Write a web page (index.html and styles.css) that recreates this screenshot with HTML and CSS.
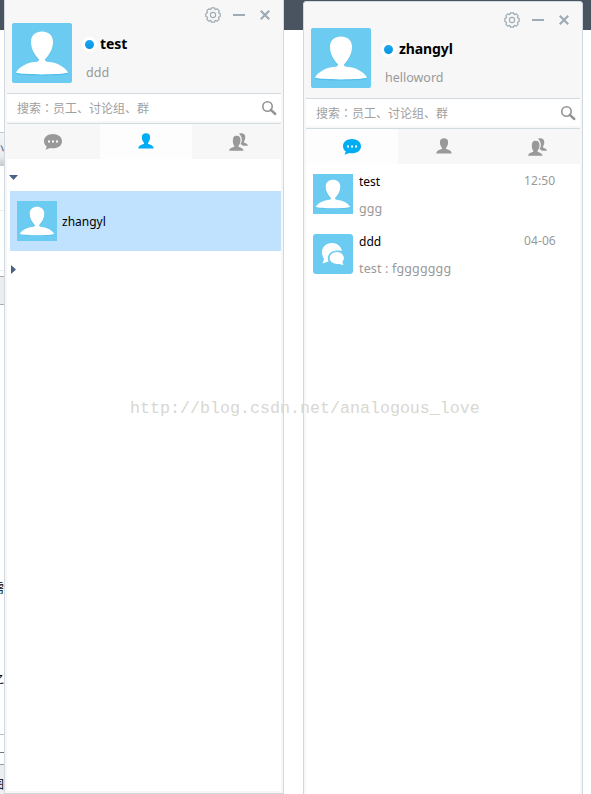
FILE: index.html
```
<!DOCTYPE html>
<html lang="zh-CN">
<head>
<meta charset="utf-8">
<title>Chat</title>
<link rel="stylesheet" href="styles.css">
</head>
<body>
<svg class="defs" width="0" height="0">
  <symbol id="avatar" viewBox="0 0 60 60">
    <rect width="60" height="60" fill="#6ccbf1"/>
    <path d="M4 51C7 45 15 41 23 40.500Q27 40 27 37.500C22 33 19 27 19 19C19 12 24 9 30 9S41 12 41 19C41 27 38 33 33 37.500Q33 40 37 40.500C45 41 53 45 56 51C51 53 9 53 4 51Z" fill="#3fb5e8" opacity=".55"/>
    <path d="M4 49.500C7 44 15 39.500 23 39Q27 39 27 36.500C22 31 19 26 19 18.500C19 12 24 8.500 30 8.500S41 12 41 18.500C41 26 38 31 33 36.500Q33 39 37 39C45 39.500 53 44 56 49.500C51 52 9 52 4 49.500Z" fill="#fff"/>
  </symbol>
  <symbol id="group" viewBox="0 0 40 40">
    <rect width="40" height="40" rx="3" fill="#6ccbf1"/>
    <path d="M19 9C13 9 9 13 9 18C9 21 10 23 11 25L9.500 29.500L15.500 27.500C13 20 19 15 29 17C28 12 24 9 19 9Z" fill="#fff"/>
    <path d="M23.500 17.500C19 17.500 16 20.500 16 24S19 30.500 23.500 30.500H26L31.500 32L30 28C34 23 29.500 17.500 23.500 17.500Z" fill="#fff" stroke="#6ccbf1" stroke-width="1.200"/>
  </symbol>
  <symbol id="gear" viewBox="0 0 16 16">
    <path d="M6.500 .8H9.500L10.200 2.600L12.300 1.900L14.100 3.700L13.400 5.800L15.200 6.500V9.500L13.400 10.200L14.100 12.300L12.300 14.100L10.200 13.400L9.500 15.200H6.500L5.800 13.400L3.700 14.100L1.900 12.300L2.600 10.200L.8 9.500V6.500L2.600 5.800L1.900 3.700L3.700 1.900L5.800 2.600Z" fill="none" stroke="#9eabb4" stroke-width="1.200" stroke-linejoin="round"/>
    <circle cx="8" cy="8" r="2.600" fill="none" stroke="#9eabb4" stroke-width="1.100"/>
  </symbol>
  <symbol id="close" viewBox="0 0 10 10">
    <path d="M.8 .8L9.200 9.200M9.200 .8L.8 9.200" stroke="#9eabb4" stroke-width="2.200"/>
  </symbol>
  <symbol id="search" viewBox="0 0 16 16">
    <circle cx="6.500" cy="6.500" r="4.700" fill="none" stroke="#939393" stroke-width="1.600"/>
    <path d="M9.800 9.800L14.300 14" stroke="#939393" stroke-width="2.400" stroke-linecap="round"/>
  </symbol>
  <symbol id="bubble" viewBox="0 0 18 16">
    <path d="M9 0C4 0 0 2.800 0 7C0 9.500 1 11.300 2.800 12.600L1.500 15.800L6.300 14Q7.500 14.300 9 14.300C14 14.300 18 11.500 18 7.200S14 0 9 0Z" fill="currentColor"/>
    <path d="M4 6.500H6V8.500H4ZM8 6.500H10V8.500H8ZM12 6.500H14V8.500H12Z" fill="#fff"/>
  </symbol>
  <symbol id="person" viewBox="0 0 16 16">
    <path d="M.3 15.500C.5 12.500 3 12 5.800 11Q6.300 10.500 5.900 9.700C4.300 8 3.900 6 3.900 4C3.900 1.500 5.500 .3 8 .3S12.100 1.500 12.100 4C12.100 6 11.700 8 10.100 9.700Q9.700 10.500 10.200 11C13 12 15.500 12.500 15.700 15.500Z" fill="currentColor"/>
  </symbol>
  <symbol id="people" viewBox="0 0 20 18">
    <path d="M10 .8C13 -.3 16.500 .6 16.300 4.500C16.200 6.800 15 8 15 9.200C16 10.500 18.500 10 19 12.700H14C12.500 11.500 12 11.500 11.500 11C13.500 8 13.500 4 10 .8Z" fill="currentColor"/>
    <path d="M.2 17.800C.5 15 3 14.800 5.200 13.800C5.700 13 5 12.500 4.500 11.500C3.600 9.500 3.800 7.500 4 6C4.500 3 6 2.700 7.800 2.700C10.500 2.700 11.500 4.500 11.500 7C11.500 9 11 11 9.700 12.500Q9.300 13.500 10 14C12 15 14.300 15 14.500 17.800Z" fill="currentColor"/>
  </symbol>
</svg>
<div class="desktop">
  <div class="behind">
    <i class="b-title"></i><i class="b-tool">小</i><i class="b-line"></i><i class="b-bar"></i>
    <i class="b-char">需</i><i class="b-char2">之</i><i class="b-rule"></i><i class="b-foot">图</i>
  </div>
  <section class="window first">
    <div class="panel">
      <header>
        <svg class="avatar"><use href="#avatar"/></svg>
        <div class="identity"><div class="nick"><span class="dot"></span>test</div><div class="sign">ddd</div></div>
        <div class="controls"><svg class="gear"><use href="#gear"/></svg><span class="min"></span><svg class="close"><use href="#close"/></svg></div>
      </header>
      <div class="search"><span>搜索<span lang="ja" class="colon">：</span>员工、讨论组、群</span><svg><use href="#search"/></svg></div>
      <nav><a><svg class="bubble"><use href="#bubble"/></svg></a><a class="on"><svg class="person"><use href="#person"/></svg></a><a><svg class="people"><use href="#people"/></svg></a></nav>
      <main class="contacts">
        <div class="fold"><svg width="9" height="5"><path d="M0 0H9L4.500 5Z"/></svg></div>
        <div class="contact"><svg><use href="#avatar"/></svg><span>zhangyl</span></div>
        <div class="fold closed"><svg width="5" height="9"><path d="M0 0V9L5 4.500Z"/></svg></div>
      </main>
    </div>
  </section>
  <section class="window second">
    <div class="panel">
      <header>
        <svg class="avatar"><use href="#avatar"/></svg>
        <div class="identity"><div class="nick"><span class="dot"></span>zhangyl</div><div class="sign">helloword</div></div>
        <div class="controls"><svg class="gear"><use href="#gear"/></svg><span class="min"></span><svg class="close"><use href="#close"/></svg></div>
      </header>
      <div class="search"><span>搜索<span lang="ja" class="colon">：</span>员工、讨论组、群</span><svg><use href="#search"/></svg></div>
      <nav><a class="on"><svg class="bubble"><use href="#bubble"/></svg></a><a><svg class="person"><use href="#person"/></svg></a><a><svg class="people"><use href="#people"/></svg></a></nav>
      <main class="chats">
        <div class="chat"><svg><use href="#avatar"/></svg><div class="text"><b>test</b><p>ggg</p></div><time>12:50</time></div>
        <div class="chat"><svg><use href="#group"/></svg><div class="text"><b>ddd</b><p class="wide">test : fggggggg</p></div><time>04-06</time></div>
      </main>
    </div>
  </section>
  <div class="watermark">http://blog.csdn.net/analogous_love</div>
</div>
</body>
</html>
```
FILE: styles.css
```
* { box-sizing: border-box; }
body { margin: 0; background: #fff; font: 12px/18px "Noto Sans", "Noto Sans CJK SC", sans-serif; color: #000; }
svg { display: block; flex: none; }
.defs { position: absolute; }
.desktop { position: relative; display: flex; align-items: flex-start; width: 591px; height: 794px; overflow: hidden; background: linear-gradient(#4a5460 0 30px, #fff 30px); }

/* sliver of the page behind the windows */
.behind { width: 4px; height: 794px; overflow: hidden; display: flex; flex-direction: column; }
.behind i { display: block; flex: none; font-style: normal; direction: rtl; line-height: 14px; }
.b-title { height: 132px; }
.b-tool { height: 34px; padding-top: 9px; color: #3458a0; border-top: 1px solid #c4c7cc; background: linear-gradient(#f4f4f4, #ececec 70%, #c8c8c8); }
.b-line { height: 111px; border-bottom: 1px solid #aaa; background: linear-gradient(transparent 44px, #eee 44px 45px, transparent 45px 104px, #eee 104px 105px, transparent 105px); }
.b-bar { height: 28px; background: #ededed; border-bottom: 1px solid #aaa; }
.b-char { height: 90px; margin-top: 277px; }
.b-char2 { height: 62px; }
.b-rule { height: 19px; border-top: 1px solid #bbb; border-bottom: 1px solid #777; }
.b-foot { height: 41px; margin-top: 11px; padding-top: 13px; background: #eee; border-top: 1px solid #999; }

.window { flex: none; width: 280px; height: 798px; padding: 2px; border: 1px solid #d0d9df; background: #f7f7f7; }
.first { margin-top: -4px; }
.second { margin: 1px 0 0 19px; border-radius: 3px 3px 0 0; }
.panel { width: 274px; height: 792px; display: flex; flex-direction: column; }
header { display: flex; height: 94px; padding: 24px 0 0 5px; position: relative; }
.avatar { width: 60px; height: 60px; border-radius: 2px; }
.identity { padding: 11px 0 0 14px; }
.nick { display: flex; align-items: center; height: 20px; margin-left: -4px; font-size: 14px; font-weight: 700; letter-spacing: -.1px; }
.dot { width: 15px; height: 15px; margin-right: 3px; border: 3px solid #fff; border-radius: 50%; background: linear-gradient(#1ca9f2, #0694e0); }
.sign { margin-top: 10px; color: #999; font-size: 12.500px; }
.controls { position: absolute; top: 8px; right: 11px; display: flex; align-items: center; height: 16px; }
.gear { width: 16px; height: 16px; }
.min { width: 12px; height: 2px; margin: 0 15px 0 12px; background: #9eabb4; }
.close { width: 10px; height: 10px; }
.search { display: flex; align-items: center; justify-content: space-between; flex: none; height: 31px; padding: 0 4px 2px 10px; border: solid #d2dbe0; border-width: 1px 0; background: linear-gradient(#fff 27px, #f7f7f7 27px); color: #a0a0a0; }
.search span { font-family: "Noto Sans CJK SC", sans-serif; }
.search .colon { font-family: "Noto Sans CJK JP", sans-serif; }
.search svg { width: 16px; height: 16px; }
nav { display: grid; grid-template-columns: 93px 92px 89px; flex: none; height: 35px; color: #999; }
.second nav { grid-template-columns: 92px 93px 89px; }
nav a { display: flex; align-items: center; justify-content: center; background: #f7f7f7; }
nav .on { color: #00adf5; background: #fdfdfd; }
.bubble { width: 18px; height: 16px; margin-right: 1px; }
.person { width: 16px; height: 16px; margin: 0 1px 1px 0; }
.people { width: 20px; height: 18px; margin-left: 4px; }
main { flex: 1; background: #fff; }
.fold { height: 32px; padding: 16px 0 0 2px; fill: #4a6088; }
.closed { padding: 14px 0 0 4px; }
.contact { display: flex; align-items: center; height: 60px; margin-left: 3px; padding-left: 7px; gap: 5px; background: #c1e2ff; }
.contact svg { width: 40px; height: 40px; }
.contact span { margin-top: 2px; }
.chat { display: flex; height: 60px; padding: 10px 0 0 7px; }
.chat svg { width: 40px; height: 40px; }
.text { width: 171px; padding-left: 6px; margin-top: -1px; }
.text b { display: block; font-weight: 400; }
.text p { margin: 9px 0 0; color: #999; font-size: 12.500px; }
.text .wide { letter-spacing: .15px; }
.chat time { margin-top: -2px; color: #999; letter-spacing: .1px; }
.watermark { position: absolute; left: 130px; top: 397px; font: 16.660px/24px "Liberation Mono", monospace; color: #d8d8d2; white-space: nowrap; }
```
